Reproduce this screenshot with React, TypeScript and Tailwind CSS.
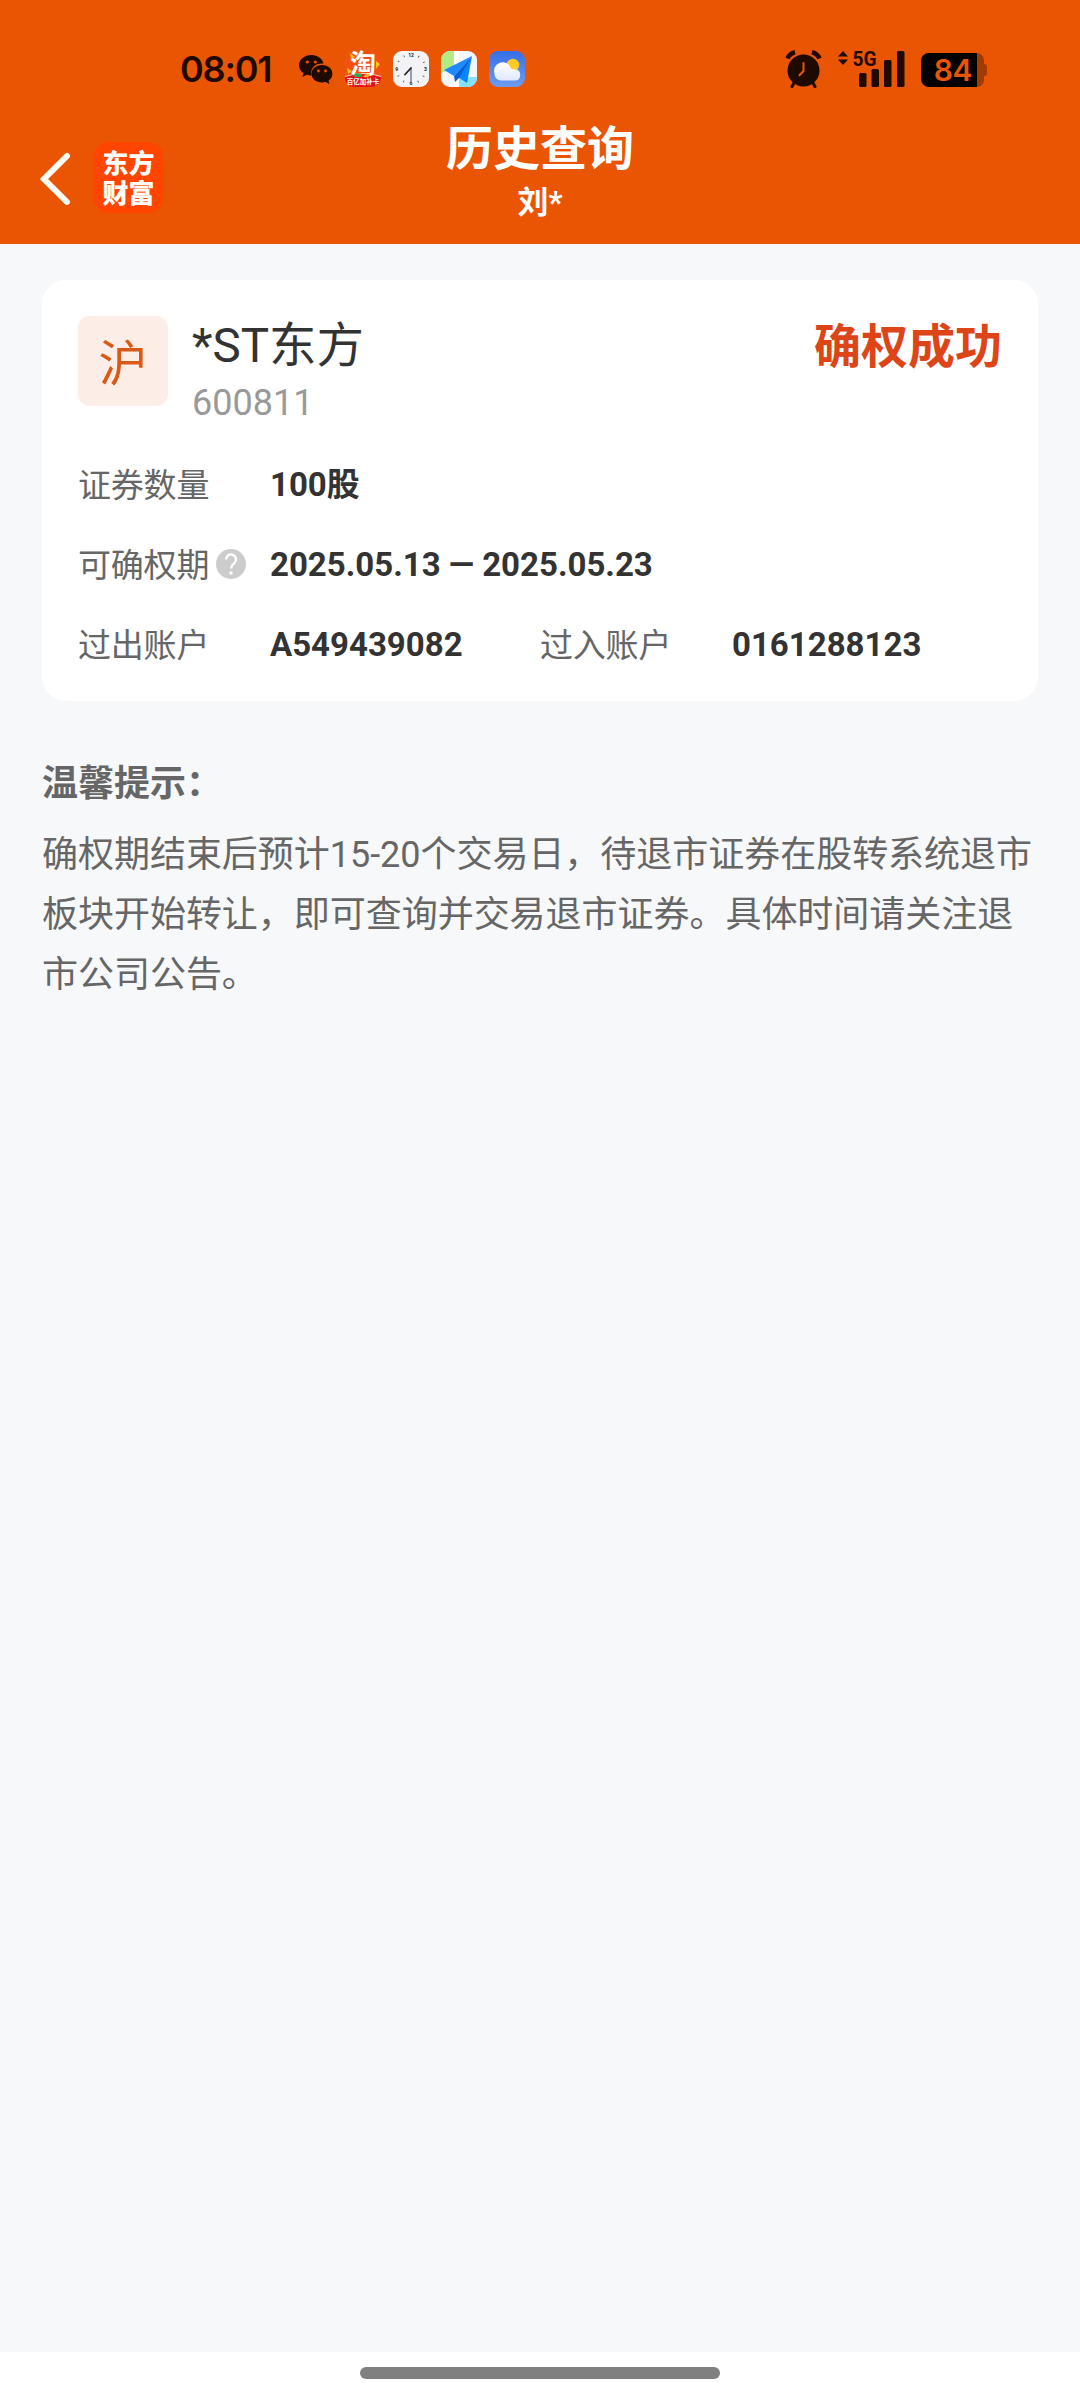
import type { ReactNode } from "react";

const TIP =
  "确权期结束后预计15-20个交易日，待退市证券在股转系统退市板块开始转让，即可查询并交易退市证券。具体时间请关注退市公司公告。";

function WechatIcon() {
  return (
    <svg className="h-9 w-[34px]" viewBox="0 0 34 36" fill="#1f0a00">
      <path d="M12.5 4C5.6 4 0 8.600 0 14.300c0 3.200 1.700 6 4.500 7.900L3.500 26l4.300-2.200c1.500.4 3 .7 4.700.6C11 17 16 12 24.500 12.600 23.500 7.500 18.600 4 12.500 4z" />
      <path d="M23 14c-6 0-10.500 3.900-10.500 8.800S17 31.500 23 31.500c1.300 0 2.500-.2 3.700-.5l3.800 2-1-3.300c2.400-1.600 3.900-4.100 3.900-6.900C33.400 17.900 29 14 23 14z" />
      <g fill="#ea5504">
        <circle cx="8.300" cy="11" r="1.600" />
        <circle cx="16.300" cy="11" r="1.600" />
        <circle cx="19.500" cy="20" r="1.400" />
        <circle cx="26.500" cy="20" r="1.400" />
      </g>
    </svg>
  );
}

function TaobaoIcon() {
  return (
    <div className="relative size-9 rounded-[9px] bg-[#f4500f]">
      <svg className="absolute inset-0 size-9" viewBox="0 0 36 36">
        <path d="M5 2l5 4-4 2zM31 10l4 3-4 5zM2 17l5 3-4 3z" fill="#ffc21a" />
        <path d="M0 25q18-6 36 0v2a9 9 0 0 1-9 9H9a9 9 0 0 1-9-9z" fill="#e60f1a" />
        <path d="M0 25.500q18-6 36 0" fill="none" stroke="#ffe0c0" strokeWidth="1" />
      </svg>
      <div className="absolute inset-x-0 top-0 text-center text-[26px] leading-[26px] font-bold text-white">淘</div>
      <svg className="absolute inset-0 size-9" viewBox="0 0 36 36">
        <rect x="9" y="22.500" width="8" height="3.500" rx="1.500" fill="#3fa34d" />
        <path d="M18 26l3-3.500 4 1-2 3z" fill="#ffb31a" />
      </svg>
      <div className="absolute inset-x-0 top-[27px] text-center text-[6.500px] leading-[8px] font-bold whitespace-nowrap text-white">
        百亿加补卡
      </div>
    </div>
  );
}

function ClockIcon() {
  return (
    <svg className="size-9" viewBox="0 0 36 36">
      <rect width="36" height="36" rx="9" fill="#f3f3f5" />
      <circle cx="18" cy="18" r="14.500" fill="none" stroke="#444" strokeWidth="2" strokeDasharray="0.800 6.792" strokeDashoffset="0.400" />
      <g fill="#f3f3f5">
        <rect x="14" y="1.500" width="8" height="5" />
        <rect x="14" y="29.500" width="8" height="5" />
        <rect x="1.500" y="15" width="4.500" height="6" />
        <rect x="30" y="15" width="4.500" height="6" />
      </g>
      <g fill="#222" fontSize="5" fontWeight="700" textAnchor="middle">
        <text x="18" y="6">12</text>
        <text x="32.500" y="19.800">3</text>
        <text x="18" y="34">6</text>
        <text x="3.600" y="19.800">9</text>
      </g>
      <path d="M18 17v13" stroke="#8794a8" strokeWidth="1.800" />
      <path d="M18 17l-6 6.500" stroke="#222" strokeWidth="1.800" strokeLinecap="round" />
    </svg>
  );
}

function MapIcon() {
  return (
    <svg className="size-9" viewBox="0 0 36 36">
      <clipPath id="map">
        <rect width="36" height="36" rx="9" />
      </clipPath>
      <g clipPath="url(#map)">
        <rect width="36" height="36" fill="#f2f5f9" />
        <path d="M0 0h13v17L0 22z" fill="#b4ec84" />
        <path d="M18 36V26h18v10z" fill="#86e0ff" />
        <path d="M13 0h5v36h-5z" fill="#fff" />
        <path d="M31 5L3 19l10 6z" fill="#1d8bff" />
        <path d="M31 5L16 25.500l10 6.500z" fill="#0a84ff" />
        <path d="M31 5L13 25l1 6 4-4z" fill="#0560d8" />
      </g>
    </svg>
  );
}

function WeatherIcon() {
  return (
    <svg className="size-9" viewBox="0 0 36 36">
      <defs>
        <linearGradient id="sky" x1="0" y1="0" x2="0" y2="1">
          <stop offset="0" stopColor="#356fe6" />
          <stop offset="1" stopColor="#6d9cf0" />
        </linearGradient>
        <linearGradient id="cloud" x1="0" y1="0" x2="0" y2="1">
          <stop offset="0" stopColor="#fff" />
          <stop offset="1" stopColor="#dfeafd" />
        </linearGradient>
      </defs>
      <rect width="36" height="36" rx="9" fill="url(#sky)" />
      <circle cx="24" cy="14" r="6.300" fill="#ffc928" />
      <path d="M11.500 29.500a6.500 6.500 0 0 1-6-7 8.500 8.500 0 0 1 16.200-5.500q2 1.700 5.300 1.500a5.600 5.600 0 0 1-1 11z" fill="url(#cloud)" />
    </svg>
  );
}

function AlarmIcon() {
  return (
    <svg className="h-[38px] w-[37px]" viewBox="0 0 37 38" fill="none" stroke="#1f0a00">
      <path d="M2.500 8.500Q4.500 3.500 10 2.200M34.500 8.500Q32.500 3.500 27 2.200" strokeWidth="4.500" />
      <path d="M9.500 32l-2.500 4.500M27.500 32l2.500 4.500" strokeWidth="3" strokeLinecap="round" />
      <circle cx="18.500" cy="20.500" r="16" fill="#1f0a00" stroke="none" />
      <path d="M18.500 13v8l-4 4.200" stroke="#ea5504" strokeWidth="2" strokeLinecap="round" />
    </svg>
  );
}

function SignalIcon() {
  return (
    <svg className="h-[38px] w-[68px] overflow-visible" viewBox="0 0 68 38" fill="#1f0a00">
      <path d="M0 6.500L5 1l5 5.500zM0 9.500h10L5 15z" />
      <text x="14.500" y="15.800" fontSize="20.500" fontWeight="700" textLength="24" lengthAdjust="spacingAndGlyphs">
        5G
      </text>
      <rect x="21" y="23" width="7.500" height="14" rx="1.500" />
      <rect x="33.500" y="19" width="7.500" height="18" rx="1.500" />
      <rect x="46" y="10" width="7.500" height="27" rx="1.500" />
      <rect x="59" y="1" width="7.500" height="36" rx="1.500" />
    </svg>
  );
}

function BatteryIcon() {
  return (
    <div className="flex items-center">
      <div className="flex h-[34px] w-[56px] items-center justify-end rounded-l-[8px] bg-black pr-[5px] font-['Inter','Noto_Sans_CJK_SC',sans-serif] text-[30px] leading-[34px] font-semibold tracking-[-0.500px] text-[#ea5504]">
        84
      </div>
      <div className="h-[34px] w-[7px] rounded-r-[8px] bg-[#a23b03]" />
      <div className="h-[12px] w-[3px] rounded-r-[3px] bg-[#a23b03]" />
    </div>
  );
}

function StatusBar() {
  return (
    <div className="flex h-[120px] items-start justify-between pt-[50px] pr-[93px] pl-[180px]">
      <div className="flex h-[38px] items-center">
        <span className="w-[119px] font-['Inter','Noto_Sans_CJK_SC',sans-serif] text-[36px] leading-[38px] font-semibold tracking-[-1.200px] text-[#1f0a00]">
          08:01
        </span>
        <div className="flex items-center gap-3">
          <WechatIcon />
          <TaobaoIcon />
          <ClockIcon />
          <MapIcon />
          <WeatherIcon />
        </div>
      </div>
      <div className="flex h-[38px] items-center">
        <AlarmIcon />
        <div className="ml-[16px]">
          <SignalIcon />
        </div>
        <div className="ml-[15px] pt-[2px]">
          <BatteryIcon />
        </div>
      </div>
    </div>
  );
}

function Header() {
  return (
    <header className="h-[244px] bg-[#ea5504]">
      <StatusBar />
      <div className="grid grid-cols-3 text-white">
        <div className="flex items-start pt-[22px] pl-[40px]">
          <svg className="mt-[9px] h-[54px] w-[32px]" viewBox="0 0 32 54" fill="none">
            <path d="M27 5L4 28l23 23" stroke="#fffdf8" strokeWidth="6" strokeLinecap="round" />
          </svg>
          <div className="ml-[21px] size-[71px] rounded-[16px] bg-[#ff4500] pt-[7px] text-center text-[26px] leading-[30px] font-black">
            东方
            <br />
            财富
          </div>
        </div>
        <div className="pt-[2px] text-center">
          <h1 className="text-[47px] leading-[54px] font-bold">历史查询</h1>
          <p className="text-[31px] leading-[54px] font-bold">刘*</p>
        </div>
      </div>
    </header>
  );
}

function Field({ label, help, children }: { label: string; help?: boolean; children: ReactNode }) {
  return (
    <div className="flex h-[40px] items-center text-[33px] leading-[40px]">
      <div className="flex w-[192px] items-center pt-px tracking-[-0.200px] text-[#666]">
        {label}
        {help && (
          <svg className="mb-[3px] ml-[7px] size-[30px]" viewBox="0 0 30 30" fill="none">
            <circle cx="15" cy="15" r="15" fill="#ccc" />
            <path d="M10 10.500a5 5 0 1 1 8.500 3.500c-2 1.700-3.500 2.700-3.500 5.500" stroke="#fff" strokeWidth="2.400" />
            <circle cx="15" cy="24" r="1.800" fill="#fff" />
          </svg>
        )}
      </div>
      <div className="font-bold text-[#333]">{children}</div>
    </div>
  );
}

function StockCard() {
  return (
    <section className="h-[421px] rounded-[24px] bg-white px-[36px] pt-[36px]">
      <div className="flex h-[149px] items-start">
        <div className="flex size-[90px] items-center justify-center rounded-xl bg-[#fceee6] pt-[7px] text-[49px] leading-none text-[#d95a16]">
          沪
        </div>
        <div className="ml-6 flex-1">
          <div className="text-[47.500px] leading-[61px] text-[#333]">*ST东方</div>
          <div className="text-[36px] leading-[53px] text-[#999]">600811</div>
        </div>
        <div className="text-[47px] leading-[62px] font-bold text-[#dd4519]">确权成功</div>
      </div>
      <div className="flex flex-col gap-10">
        <Field label="证券数量">100股</Field>
        <Field label="可确权期" help>
          2025.05.13 — 2025.05.23
        </Field>
        <div className="grid grid-cols-2">
          <Field label="过出账户">A549439082</Field>
          <Field label="过入账户">0161288123</Field>
        </div>
      </div>
    </section>
  );
}

export default function App() {
  return (
    <div className="flex h-[2400px] w-[1080px] flex-col bg-[#f7f8fa] font-['Roboto','Noto_Sans_CJK_SC',sans-serif]">
      <Header />
      <main className="flex-1 px-[42px] pt-9">
        <StockCard />
        <section className="pt-[53px] text-[36px] text-[#666]">
          <h2 className="mb-[11px] leading-[60px] font-bold">温馨提示：</h2>
          <p className="leading-[60px] tracking-[-0.030px]">{TIP}</p>
        </section>
      </main>

      {/* Gesture bar */}
      <div className="flex h-12 justify-center bg-white pt-[15px]">
        <div className="h-3 w-[360px] rounded-full bg-[#808080]" />
      </div>
    </div>
  );
}
